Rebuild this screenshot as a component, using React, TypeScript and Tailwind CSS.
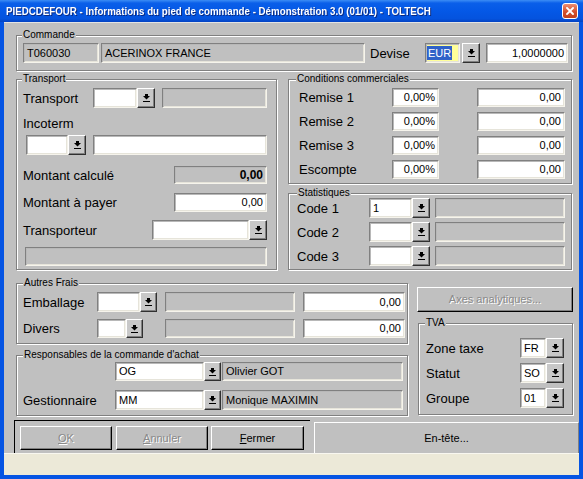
import React from 'react';

const sunken =
  'border border-t-[#808080] border-l-[#808080] border-b-[#f6f4ec] border-r-[#f6f4ec] shadow-[inset_1px_1px_0_#b8b8b8,inset_-1px_-1px_0_#e6e4da]';

type FieldProps = {
  className?: string;
  value?: string;
  gray?: boolean;
  right?: boolean;
  bold?: boolean;
};

const Field: React.FC<FieldProps> = ({ className = '', value = '', gray = false, right = false, bold = false }) => (
  <div
    className={`${sunken} ${gray ? 'bg-[#c0c0c0]' : 'bg-white'} ${right ? 'justify-end' : 'justify-start'} ${
      bold ? 'font-bold text-[12px]' : 'text-[11px]'
    } flex items-center px-[3px] text-black leading-none overflow-hidden whitespace-nowrap ${className}`}
  >
    {value}
  </div>
);

const Arrow = () => (
  <svg width="7" height="8" viewBox="0 0 7 8">
    <rect x="2" y="0" width="3" height="2" fill="#000" />
    <polygon points="0,2 7,2 3.5,5.6" fill="#000" />
    <rect x="0" y="7" width="7" height="1" fill="#000" />
  </svg>
);

const DropBtn: React.FC<{ className?: string }> = ({ className = 'w-[18px]' }) => (
  <div
    className={`h-full shrink-0 flex items-center justify-center bg-[#c8c8c8] border border-t-white border-l-white border-b-[#303030] border-r-[#303030] shadow-[inset_-1px_-1px_0_#808080] ${className}`}
  >
    <Arrow />
  </div>
);

type GroupProps = {
  label: string;
  className?: string;
  labelClass?: string;
  children?: React.ReactNode;
};

// Etched Windows group box; the caption sits over the top line
const Group: React.FC<GroupProps> = ({ label, className = '', labelClass = 'left-[5px]', children }) => (
  <div
    className={`relative shrink-0 flex flex-col border border-[#808080] shadow-[inset_1px_1px_0_#fff,1px_1px_0_#fff] ${className}`}
  >
    <span
      className={`absolute -top-[7px] bg-[#c0c0c0] px-[1px] text-[10px] leading-[12px] text-black whitespace-nowrap ${labelClass}`}
    >
      {label}
    </span>
    {children}
  </div>
);

const Label: React.FC<{ className?: string; children: React.ReactNode }> = ({ className = '', children }) => (
  <span className={`shrink-0 text-[13px] leading-none text-black whitespace-nowrap ${className}`}>{children}</span>
);

const disabledText = 'text-[#8a8a8a] [text-shadow:1px_1px_0_#fff]';

const raised =
  'border border-t-white border-l-white border-b-black border-r-black shadow-[inset_-1px_-1px_0_#808080]';

export default function App() {
  return (
    <div className="w-[583px] h-[479px] flex flex-col bg-[#0554e3] font-['Liberation_Sans',Arial,sans-serif] select-none">
      {/* Title bar */}
      <div className="h-[22px] shrink-0 flex items-center justify-between pl-[6px] pr-[5px] bg-[linear-gradient(to_bottom,#3c8df5_0%,#0a5fe9_14%,#0458e6_50%,#0453de_85%,#0443c2_100%)]">
        <span className="inline-block origin-left scale-x-[0.885] text-[11px] font-bold text-white whitespace-nowrap [text-shadow:1px_1px_0_#0a2a80]">
          PIEDCDEFOUR - Informations du pied de commande - Démonstration 3.0 (01/01) - TOLTECH
        </span>
        <div className="w-[16px] h-[16px] shrink-0 flex items-center justify-center rounded-[3px] border border-white bg-[linear-gradient(to_bottom,#eb8d72,#d4512e_55%,#c0401c)]">
          <svg width="8" height="8" viewBox="0 0 8 8">
            <path d="M1 1 L7 7 M7 1 L1 7" stroke="#fff" strokeWidth="1.9" strokeLinecap="square" />
          </svg>
        </div>
      </div>

      {/* Client area */}
      <div className="ml-[4px] w-[575px] flex flex-col">
        <div className="h-[431px] flex flex-col bg-[#c0c0c0] border-t border-t-[#e4e4e4]">
          {/* Commande */}
          <Group label="Commande" className="mt-[12px] ml-[12px] w-[556px] h-[36px]">
            <div className="mt-[7px] h-[20px] flex items-center">
              <Field gray className="ml-[6px] w-[76px] h-full" value="T060030" />
              <Field gray className="ml-[2px] w-[264px] h-full" value="ACERINOX FRANCE" />
              <Label className="ml-[5px] w-[55px]">Devise</Label>
              <div className={`${sunken} w-[35px] h-full bg-[#ffff99] flex items-center pl-[1px]`}>
                <span className="bg-[#2f62c8] text-white text-[11px] leading-[14px] px-[1px]">EUR</span>
              </div>
              <DropBtn className="ml-[2px] w-[18px]" />
              <Field right className="ml-[6px] w-[82px] h-full" value="1,0000000" />
            </div>
          </Group>

          {/* Row B */}
          <div className="mt-[8px] flex">
            <Group label="Transport" className="ml-[12px] w-[261px] h-[191px]">
              <div className="mt-[8px] h-[20px] flex items-center pl-[6px]">
                <Label className="w-[70px]">Transport</Label>
                <Field className="w-[44px] h-full" />
                <DropBtn />
                <Field gray className="ml-[7px] w-[105px] h-full" />
              </div>
              <div className="mt-[7px] h-[16px] flex items-center pl-[6px]">
                <Label>Incoterm</Label>
              </div>
              <div className="mt-[4px] h-[20px] flex items-center pl-[9px]">
                <Field className="w-[42px] h-full" />
                <DropBtn />
                <Field className="ml-[7px] w-[174px] h-full" />
              </div>
              <div className="mt-[11px] h-[18px] flex items-center pl-[6px] pr-[9px]">
                <Label>Montant calculé</Label>
                <Field gray bold right className="ml-auto w-[93px] h-full" value="0,00" />
              </div>
              <div className="mt-[9px] h-[19px] flex items-center pl-[6px] pr-[9px]">
                <Label>Montant à payer</Label>
                <Field right className="ml-auto w-[93px] h-full" value="0,00" />
              </div>
              <div className="mt-[8px] h-[20px] flex items-center pl-[6px] pr-[9px]">
                <Label>Transporteur</Label>
                <Field className="ml-auto w-[97px] h-full" />
                <DropBtn />
              </div>
              <div className="mt-[7px] h-[19px] flex items-center pl-[8px]">
                <Field gray className="w-[242px] h-full" />
              </div>
            </Group>

            <div className="ml-[11px] flex flex-col">
              <Group label="Conditions commerciales" labelClass="left-[7px]" className="w-[284px] h-[105px]">
                {['Remise 1', 'Remise 2', 'Remise 3', 'Escompte'].map((r, i) => (
                  <div key={r} className={`${i === 0 ? 'mt-[8px]' : 'mt-[5px]'} h-[19px] flex items-center pl-[10px]`}>
                    <Label className="w-[93px]">{r}</Label>
                    <Field right className="w-[47px] h-full" value="0,00%" />
                    <Field right className="ml-[38px] w-[88px] h-full" value="0,00" />
                  </div>
                ))}
              </Group>
              <Group label="Statistiques" labelClass="left-[8px]" className="mt-[9px] w-[284px] h-[77px]">
                {['Code 1', 'Code 2', 'Code 3'].map((c, i) => (
                  <div key={c} className="mt-[4px] h-[20px] flex items-center pl-[8px]">
                    <Label className="w-[72px]">{c}</Label>
                    <Field className="w-[43px] h-full" value={i === 0 ? '1' : ''} />
                    <DropBtn />
                    <Field gray className="ml-[5px] w-[130px] h-full" />
                  </div>
                ))}
              </Group>
            </div>
          </div>

          {/* Row C */}
          <div className="mt-[13px] h-[133px] flex">
            <div className="ml-[12px] flex flex-col">
              <Group label="Autres Frais" labelClass="left-[6px]" className="w-[392px] h-[61px]">
                <div className="mt-[8px] h-[20px] flex items-center pl-[6px]">
                  <Label className="w-[74px]">Emballage</Label>
                  <Field className="w-[43px] h-full" />
                  <DropBtn className="w-[17px]" />
                  <Field gray className="ml-[8px] w-[130px] h-full" />
                  <Field right className="ml-[8px] w-[102px] h-full" value="0,00" />
                </div>
                <div className="mt-[7px] h-[19px] flex items-center pl-[6px]">
                  <Label className="w-[74px]">Divers</Label>
                  <Field className="w-[29px] h-full" />
                  <DropBtn className="w-[17px]" />
                  <Field gray className="ml-[22px] w-[130px] h-full" />
                  <Field right className="ml-[8px] w-[102px] h-full" value="0,00" />
                </div>
              </Group>
              <Group
                label="Responsables de la commande d'achat"
                labelClass="left-[6px]"
                className="mt-[11px] w-[392px] h-[61px]"
              >
                <div className="mt-[6px] h-[19px] flex items-center pl-[98px]">
                  <Field className="w-[89px] h-full" value="OG" />
                  <DropBtn className="w-[17px]" />
                  <Field gray className="ml-[1px] w-[181px] h-full" value="Olivier GOT" />
                </div>
                <div className="mt-[9px] h-[20px] flex items-center pl-[6px]">
                  <Label className="w-[92px]">Gestionnaire</Label>
                  <Field className="w-[89px] h-full" value="MM" />
                  <DropBtn className="w-[17px]" />
                  <Field gray className="ml-[1px] w-[181px] h-full" value="Monique MAXIMIN" />
                </div>
              </Group>
            </div>

            <div className="ml-[9px] flex flex-col">
              <div
                className={`${raised} mt-[4px] w-[156px] h-[25px] bg-[#c0c0c0] flex items-center justify-center text-[11px] ${disabledText}`}
              >
                Axes analytiques...
              </div>
              <Group label="TVA" labelClass="left-[6px]" className="mt-[11px] ml-[1px] w-[155px] h-[92px]">
                {[
                  ['Zone taxe', 'FR'],
                  ['Statut', 'SO'],
                  ['Groupe', '01'],
                ].map(([l, v], i) => (
                  <div key={l} className={`${i === 0 ? 'mt-[14px]' : 'mt-[5px]'} h-[20px] flex items-center pl-[7px]`}>
                    <Label className="w-[94px]">{l}</Label>
                    <Field className="w-[26px] h-full" value={v} />
                    <DropBtn />
                  </div>
                ))}
              </Group>
            </div>
          </div>

          {/* Row D: buttons */}
          <div className="mt-[4px] flex-1 flex">
            <div className="ml-[10px] w-[296px] h-full border-t border-l border-black flex pl-[5px] pt-[5px]">
              <button className={`${raised} w-[92px] h-[24px] bg-[#c0c0c0] text-[11px] ${disabledText}`}>
                <u>O</u>K
              </button>
              <button className={`${raised} ml-[4px] w-[92px] h-[24px] bg-[#c0c0c0] text-[11px] ${disabledText}`}>
                <u>A</u>nnuler
              </button>
              <button className={`${raised} ml-[3px] w-[93px] h-[24px] bg-[#c0c0c0] text-[11px] text-black`}>
                <u>F</u>ermer
              </button>
            </div>
            <div className="ml-[4px] mt-[2px] w-[261px] flex-1 border-t border-l border-r border-t-white border-l-white border-r-[#808080] flex items-center justify-center text-[11px] text-black">
              En-tête...
            </div>
          </div>
        </div>

        {/* Status strip */}
        <div className="h-[22px] bg-[#ece9d8] border-t border-t-[#f8f7f0]" />
      </div>
    </div>
  );
}
